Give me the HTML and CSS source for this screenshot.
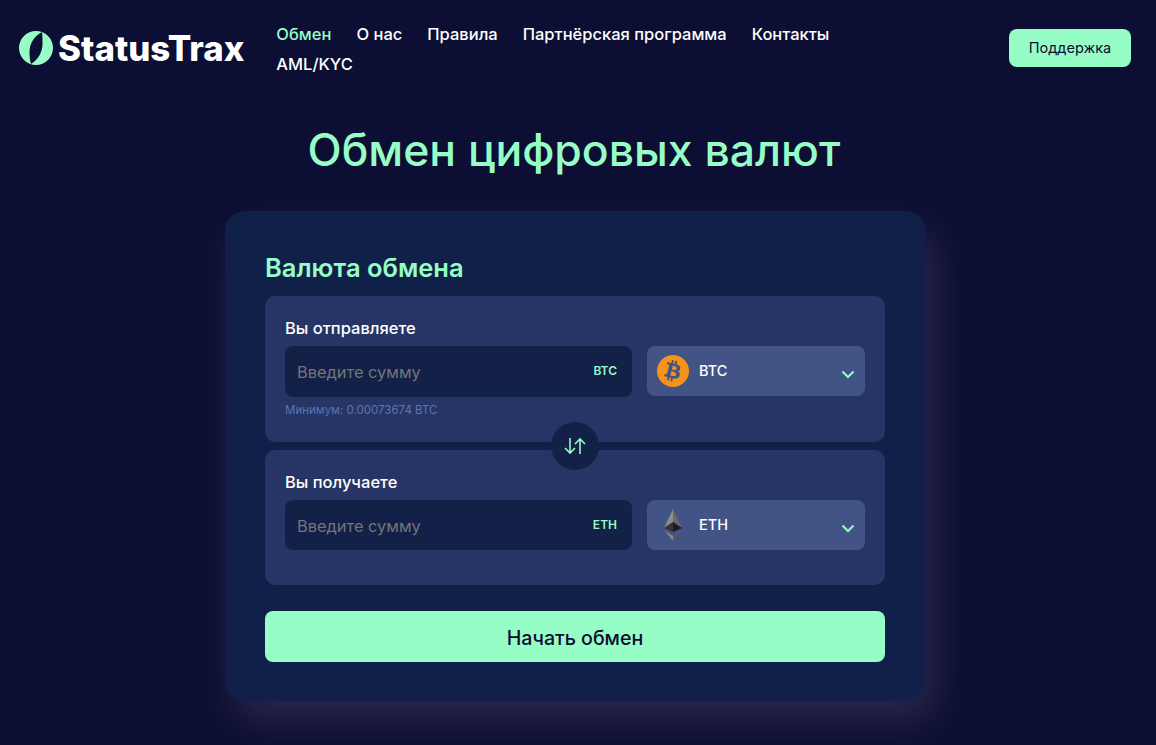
FILE: index.html
```html
<!DOCTYPE html>
<html lang="ru">
<head>
    <meta charset="UTF-8">
    <meta name="viewport" content="width=device-width, initial-scale=1.0">
    <title>StatusTrax</title>
    <link rel="stylesheet" href="styles.css">
</head>
<body>
    <header class="header">
        <a class="logo" href="#">
            <svg class="logo-icon" viewBox="0 0 34 34">
                <path fill="#95fdc5" fill-rule="evenodd" d="M17 0a17 17 0 1 1 0 34a17 17 0 1 1 0-34zM23 1C15 5 10.500 13 10.500 21C10.500 26 11 30 12 33C19 29 23.500 21 23.500 13C23.500 8 23.500 4 23 1z"/>
            </svg>
            <span>StatusTrax</span>
        </a>
        <nav class="nav">
            <a class="nav-link active" href="#">Обмен</a>
            <a class="nav-link" href="#">О нас</a>
            <a class="nav-link" href="#">Правила</a>
            <a class="nav-link" href="#">Партнёрская программа</a>
            <a class="nav-link" href="#">Контакты</a>
            <a class="nav-link" href="#">AML/KYC</a>
        </nav>
        <a class="support-btn" href="#">Поддержка</a>
    </header>

    <main class="main">
        <h1 class="page-title">Обмен цифровых валют</h1>

        <section class="card">
            <h2 class="card-title">Валюта обмена</h2>

            <div class="panel panel-send">
                <div class="panel-label">Вы отправляете</div>
                <div class="fields">
                    <div class="amount">
                        <span class="placeholder">Введите сумму</span>
                        <span class="ticker">BTC</span>
                    </div>
                    <div class="select">
                        <svg class="coin" viewBox="0 0 32 32">
                            <circle cx="16" cy="16" r="16" fill="#f7931a"/>
                            <path transform="translate(-1.600 -1.600) scale(1.100)" fill="#44557f" fill-rule="evenodd" d="M22.700 13.900c.3-2.100-1.300-3.200-3.500-4l.7-2.800-1.700-.4-.7 2.700-1.400-.3.7-2.700-1.700-.4-.7 2.800-1.100-.3-2.400-.6-.4 1.800s1.300.3 1.200.3c.7.2.8.6.8 1l-.8 3.200-1.100 4.400c-.1.200-.3.500-.8.400 0 .1-1.200-.3-1.200-.3l-.8 1.900 2.200.6 1.200.3-.7 2.800 1.700.4.700-2.800 1.400.4-.7 2.800 1.700.4.700-2.800c2.900.5 5.100.3 6-2.300.7-2.100 0-3.300-1.500-4.100 1.100-.3 1.900-1 2.100-2.500zm-3.900 5.400c-.5 2.100-4 1-5.200.7l.9-3.700c1.200.3 4.800.9 4.300 3zm.5-5.400c-.5 1.900-3.400.9-4.300.7l.8-3.300c1 .2 4 .7 3.500 2.600z"/>
                        </svg>
                        <span class="select-name">BTC</span>
                        <svg class="chevron" viewBox="0 0 14 10">
                            <path d="M1.500 2.500L7 8l5.500-5.500" fill="none" stroke="#95fdc5" stroke-width="2"/>
                        </svg>
                    </div>
                </div>
                <div class="hint">Минимум: 0.00073674 BTC</div>
                <button class="swap" type="button">
                    <svg viewBox="0 0 24 20" width="24" height="20">
                        <path d="M7 2v15M2 12l5 5 5-5M17 18V3M12 8l5-5 5 5" fill="none" stroke="#95fdc5" stroke-width="1.600"/>
                    </svg>
                </button>
            </div>

            <div class="panel panel-receive">
                <div class="panel-label">Вы получаете</div>
                <div class="fields">
                    <div class="amount">
                        <span class="placeholder">Введите сумму</span>
                        <span class="ticker">ETH</span>
                    </div>
                    <div class="select">
                        <svg class="coin" viewBox="0 0 32 32">
                            <path fill="#8c8c8c" d="M16 0L7 19l9-6z"/>
                            <path fill="#696969" d="M16 0l9 19-9-6z"/>
                            <path fill="#363636" d="M16 13L7 19l9 4z"/>
                            <path fill="#1c1c1c" d="M16 13l9 6-9 4z"/>
                            <path fill="#858585" d="M7 21l9 11v-5z"/>
                            <path fill="#5c5c5c" d="M25 21l-9 11v-5z"/>
                        </svg>
                        <span class="select-name">ETH</span>
                        <svg class="chevron" viewBox="0 0 14 10">
                            <path d="M1.500 2.500L7 8l5.500-5.500" fill="none" stroke="#95fdc5" stroke-width="2"/>
                        </svg>
                    </div>
                </div>
            </div>

            <button class="start-btn" type="button">Начать обмен</button>
        </section>
    </main>
</body>
</html>
```

FILE: styles.css
```css
* {
    box-sizing: border-box;
}

html, body {
    height: 100%;
}

body {
    margin: 0;
    overflow: hidden;
    background-color: #0d0e33;
    color: #ffffff;
    font-family: Inter, "Noto Sans", sans-serif;
}

a {
    color: inherit;
    text-decoration: none;
}

/* Top bar */
.header {
    display: flex;
    align-items: flex-start;
    padding: 19px 25px 0 19px;
}

.logo {
    display: flex;
    align-items: center;
    gap: 5px;
    margin-top: 11px;
    font-size: 34.800px;
    font-weight: 800;
    line-height: 36px;
}

.logo-icon {
    width: 34px;
    height: 34px;
    flex: none;
}

.nav {
    display: flex;
    flex-wrap: wrap;
    column-gap: 25px;
    width: 600px;
    margin-left: 32px;
    font-size: 16.500px;
    font-weight: 500;
    line-height: 30px;
}

.nav-link.active {
    color: #95fdc5;
}

.support-btn {
    margin-left: auto;
    margin-top: 10px;
    width: 122px;
    height: 38px;
    border-radius: 8px;
    background-color: #95fdc5;
    color: #0c0c30;
    font-size: 14.500px;
    line-height: 38px;
    text-align: center;
}

/* Exchange card */
.main {
    display: flex;
    flex-direction: column;
    align-items: center;
    padding-right: 6px;
}

.page-title {
    margin: 43px 2px 0 0;
    color: #95fdc5;
    font-size: 44.500px;
    font-weight: 500;
    line-height: 56px;
}

.card {
    width: 700px;
    height: 490px;
    margin-top: 33px;
    padding: 40px;
    border-radius: 20px;
    background-color: #112048;
    box-shadow: 10px 20px 40px rgba(255, 255, 255, 0.11);
}

.card-title {
    margin: 0 0 12px;
    color: #95fdc5;
    font-size: 25.500px;
    font-weight: 600;
    line-height: 33px;
}

.panel {
    position: relative;
    padding: 20px 20px 0;
    border-radius: 10px;
    background-color: #263566;
}

.panel-send {
    height: 146px;
    margin-bottom: 8px;
}

.panel-receive {
    height: 135px;
}

.panel-label {
    font-size: 16.500px;
    font-weight: 500;
    line-height: 24px;
    margin-bottom: 6px;
}

.fields {
    display: flex;
    gap: 15px;
}

.amount {
    display: flex;
    align-items: center;
    justify-content: space-between;
    width: 347px;
    height: 50px;
    padding: 0 15px 0 12px;
    border-radius: 8px;
    background-color: #132048;
}

.panel-send .amount {
    height: 51px;
}

.placeholder {
    color: #757575;
    font-size: 16.400px;
    padding-top: 1px;
}

.ticker {
    color: #95fdc5;
    font-size: 12px;
    font-weight: 600;
    padding-bottom: 2px;
}

.select {
    display: flex;
    align-items: center;
    width: 218px;
    height: 50px;
    padding: 0 10px;
    border-radius: 8px;
    background-color: #425386;
}

.coin {
    width: 32px;
    height: 32px;
    flex: none;
}

.select-name {
    margin-left: 10px;
    padding-bottom: 2px;
    font-size: 14.500px;
    font-weight: 500;
}

.chevron {
    width: 14px;
    height: 10px;
    margin: 5px 0 0 auto;
}

.hint {
    margin-top: 6px;
    color: #5677b5;
    font-size: 11.500px;
    line-height: 14px;
}

.swap {
    position: absolute;
    left: 50%;
    bottom: -28px;
    display: flex;
    align-items: center;
    justify-content: center;
    width: 48px;
    height: 48px;
    margin-left: -24px;
    padding: 0;
    border: none;
    border-radius: 50%;
    background-color: #132048;
    z-index: 1;
}

.start-btn {
    display: block;
    width: 100%;
    height: 51px;
    margin-top: 26px;
    padding: 3px 0 0;
    border: none;
    border-radius: 8px;
    background-color: #95fdc5;
    color: #0c0c30;
    font-family: inherit;
    font-size: 19.600px;
    font-weight: 500;
}
```
